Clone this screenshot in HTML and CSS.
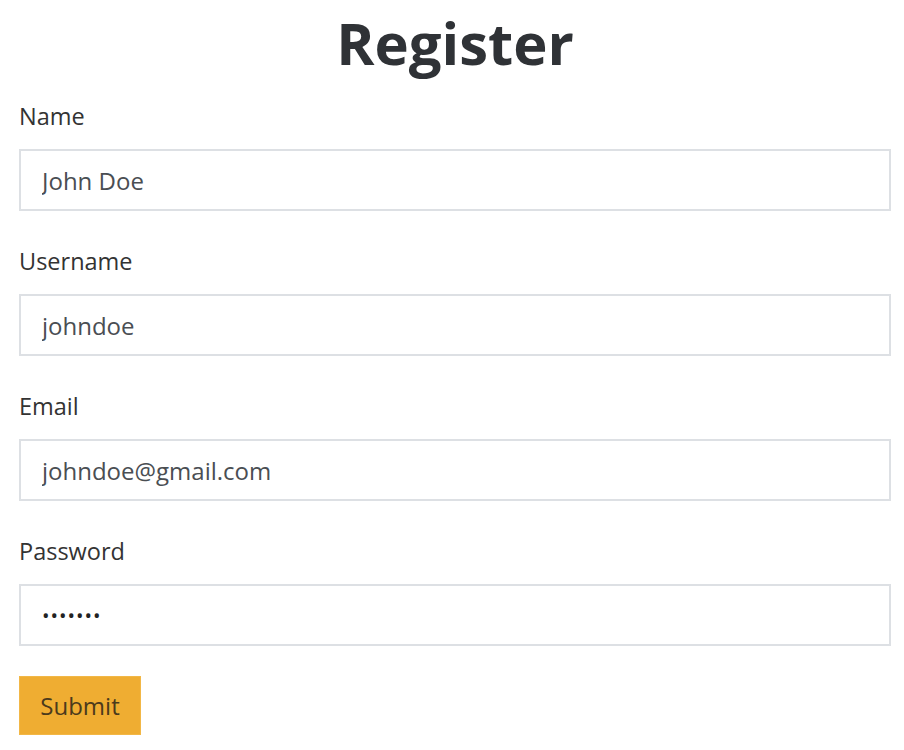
FILE: index.html
```html
<!DOCTYPE html>
<html>
<head>
<meta charset="utf-8">
<link rel="stylesheet" href="styles.css">
</head>
<body>
<div class="page">
  <h1 class="title">Register</h1>
  <form class="form">
    <div class="group">
      <label class="label">Name</label>
      <input class="field" type="text" value="John Doe">
    </div>
    <div class="group">
      <label class="label">Username</label>
      <input class="field" type="text" value="johndoe">
    </div>
    <div class="group">
      <label class="label">Email</label>
      <input class="field" type="text" value="johndoe@gmail.com">
    </div>
    <div class="group">
      <label class="label">Password</label>
      <input class="field pw" type="password" value="1234567">
    </div>
    <button class="submit" type="button">Submit</button>
  </form>
</div>
</body>
</html>
```
FILE: styles.css
```css
html, body {
  margin: 0;
  padding: 0;
  background: #ffffff;
}
body {
  font-family: "Open Sans", "Noto Sans", sans-serif;
  color: #333333;
}
.page {
  width: 872px;
  margin-left: 19px;
  padding-top: 8px;
}
.title {
  margin: 0;
  text-align: center;
  font-size: 58px;
  font-weight: 700;
  line-height: 70px;
  color: #2f3236;
}
.form {
  display: flex;
  flex-direction: column;
  align-items: flex-start;
  margin-top: 23px;
}
.group {
  display: flex;
  flex-direction: column;
  width: 100%;
  gap: 18px;
  margin-bottom: 35px;
}
.group:last-of-type {
  margin-bottom: 30px;
}
.label {
  font-size: 23.5px;
  line-height: 30px;
  color: #333333;
}
.field {
  box-sizing: border-box;
  width: 100%;
  height: 62px;
  border: 2px solid #dde0e4;
  border-radius: 0;
  padding: 0 21px;
  font-family: "Open Sans", "Noto Sans", sans-serif;
  font-size: 24px;
  color: #4a4e53;
  outline: none;
  background: #fff;
}
.pw {
  color: #222;
  font-size: 20px;
  letter-spacing: 1px;
}
.submit {
  height: 59px;
  width: 122px;
  background: #efad32;
  border: 1px solid #f2b746;
  font-family: "Open Sans", "Noto Sans", sans-serif;
  font-size: 24px;
  color: #4b3a1c;
  padding: 0;
}
```
